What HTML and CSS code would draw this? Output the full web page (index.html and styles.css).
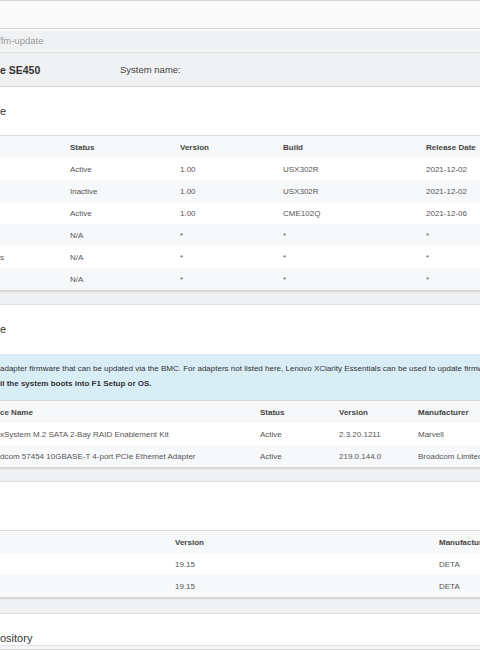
FILE: index.html
```html
<!DOCTYPE html>
<html lang="en">
<head>
    <meta charset="UTF-8">
    <meta name="viewport" content="width=device-width, initial-scale=1.0">
    <title>Firmware Update</title>
    <link rel="stylesheet" href="styles.css">
</head>
<body>
    <div class="topbar"></div>
    <div class="crumb"><span>/fm-update</span></div>
    <div class="sysbar">
        <span class="model">e SE450</span>
        <span class="sysname">System name:</span>
    </div>

    <div class="page">
        <!-- system firmware -->
        <div class="card">
            <div class="card-title">e</div>
            <table class="fw">
                <colgroup>
                    <col style="width: 70px">
                    <col style="width: 110px">
                    <col style="width: 103px">
                    <col style="width: 143px">
                    <col>
                </colgroup>
                <thead>
                    <tr><th></th><th>Status</th><th>Version</th><th>Build</th><th>Release Date</th></tr>
                </thead>
                <tbody>
                    <tr><td></td><td>Active</td><td>1.00</td><td>USX302R</td><td>2021-12-02</td></tr>
                    <tr><td></td><td>Inactive</td><td>1.00</td><td>USX302R</td><td>2021-12-02</td></tr>
                    <tr><td></td><td>Active</td><td>1.00</td><td>CME102Q</td><td>2021-12-06</td></tr>
                    <tr><td></td><td>N/A</td><td>*</td><td>*</td><td>*</td></tr>
                    <tr><td>s</td><td>N/A</td><td>*</td><td>*</td><td>*</td></tr>
                    <tr><td></td><td>N/A</td><td>*</td><td>*</td><td>*</td></tr>
                </tbody>
            </table>
        </div>

        <!-- adapter firmware -->
        <div class="card">
            <div class="card-title tall">e</div>
            <div class="alert">
                <div>adapter firmware that can be updated via the BMC. For adapters not listed here, Lenovo XClarity Essentials can be used to update firmware.</div>
                <div class="alert-note">il the system boots into F1 Setup or OS.</div>
            </div>
            <table class="fw">
                <colgroup>
                    <col style="width: 260px">
                    <col style="width: 79px">
                    <col style="width: 79px">
                    <col>
                </colgroup>
                <thead>
                    <tr><th>ce Name</th><th>Status</th><th>Version</th><th>Manufacturer</th></tr>
                </thead>
                <tbody>
                    <tr><td>xSystem M.2 SATA 2-Bay RAID Enablement Kit</td><td>Active</td><td>2.3.20.1211</td><td>Marvell</td></tr>
                    <tr><td>dcom 57454 10GBASE-T 4-port PCIe Ethernet Adapter</td><td>Active</td><td>219.0.144.0</td><td>Broadcom Limited</td></tr>
                </tbody>
            </table>
        </div>

        <!-- power supply firmware -->
        <div class="card">
            <div class="card-title"></div>
            <table class="fw">
                <colgroup>
                    <col style="width: 175px">
                    <col style="width: 264px">
                    <col>
                </colgroup>
                <thead>
                    <tr><th></th><th>Version</th><th>Manufacturer</th></tr>
                </thead>
                <tbody>
                    <tr><td></td><td>19.15</td><td>DETA</td></tr>
                    <tr><td></td><td>19.15</td><td>DETA</td></tr>
                </tbody>
            </table>
        </div>

        <!-- repository -->
        <div class="card repo">
            <div class="card-title short">ository</div>
            <div class="card-bar"></div>
        </div>
    </div>
</body>
</html>
```

FILE: styles.css
```css
html, body {
    margin: 0;
    padding: 0;
    overflow: hidden;
}
body {
    font-family: "Liberation Sans", Arial, sans-serif;
    font-size: 8px;
    color: #555;
    background-color: #f0f1f3;
}

.topbar {
    height: 27px;
    background-color: #fafafa;
    border-top: 1px solid #d4d4d4;
    border-bottom: 1px solid #d4d4d4;
}
.crumb {
    height: 19px;
    line-height: 19px;
    background-color: #f0f1f3;
    border-top: 2px solid #fbfbfb;
    border-bottom: 2px solid #f3f8f1;
    font-size: 9.5px;
    color: #9a9a9a;
}
.crumb span {
    margin-left: -2px;
}
.sysbar {
    display: flex;
    align-items: center;
    height: 33px;
    background-color: #f0f1f3;
    border-top: 1px solid #e2e2e2;
    border-bottom: 1px solid #d8d8d8;
}
.model {
    width: 120px;
    font-size: 10.5px;
    font-weight: bold;
    color: #333;
}
.sysname {
    font-size: 9.5px;
    color: #444;
}

.page {
    margin-left: -8px;
    width: 648px;
}
.card {
    background-color: white;
    border-top: 1px solid #dedede;
    border-bottom: 1px solid #d4d4d4;
    box-shadow: 0 1px 2px rgba(0, 0, 0, 0.12);
    margin-bottom: 13px;
}
.card:first-child {
    border-top: none;
}
.card.repo {
    margin-top: 15px;
}
.card-title {
    height: 48px;
    line-height: 48px;
    padding-left: 8px;
    font-size: 11px;
    color: #333;
}
.card-title.tall {
    height: 49px;
    line-height: 49px;
}
.card-title.short {
    height: 31px;
    line-height: 48px;
    overflow: visible;
}
.card-bar {
    height: 3px;
    border-top: 1px solid #e4e4e4;
    border-bottom: 1px solid #d8d8d8;
    background-color: #f3f4f6;
    margin-bottom: 30px;
}

.alert {
    background-color: #d9edf7;
    padding: 7px 8px 9px;
    line-height: 15px;
    color: #333;
    white-space: nowrap;
    overflow: hidden;
}
.alert-note {
    font-weight: bold;
}

.fw {
    width: 100%;
    table-layout: fixed;
    border-collapse: collapse;
}
.fw th, .fw td {
    height: 22px;
    padding: 0 8px;
    text-align: left;
    white-space: nowrap;
    overflow: hidden;
}
.fw thead tr {
    border-top: 1px solid #dcdcdc;
    background-color: #f7f8fa;
}
.fw th {
    font-weight: bold;
    color: #444;
}
.fw tbody tr:nth-child(even) {
    background-color: #f7f8fa;
}
```
